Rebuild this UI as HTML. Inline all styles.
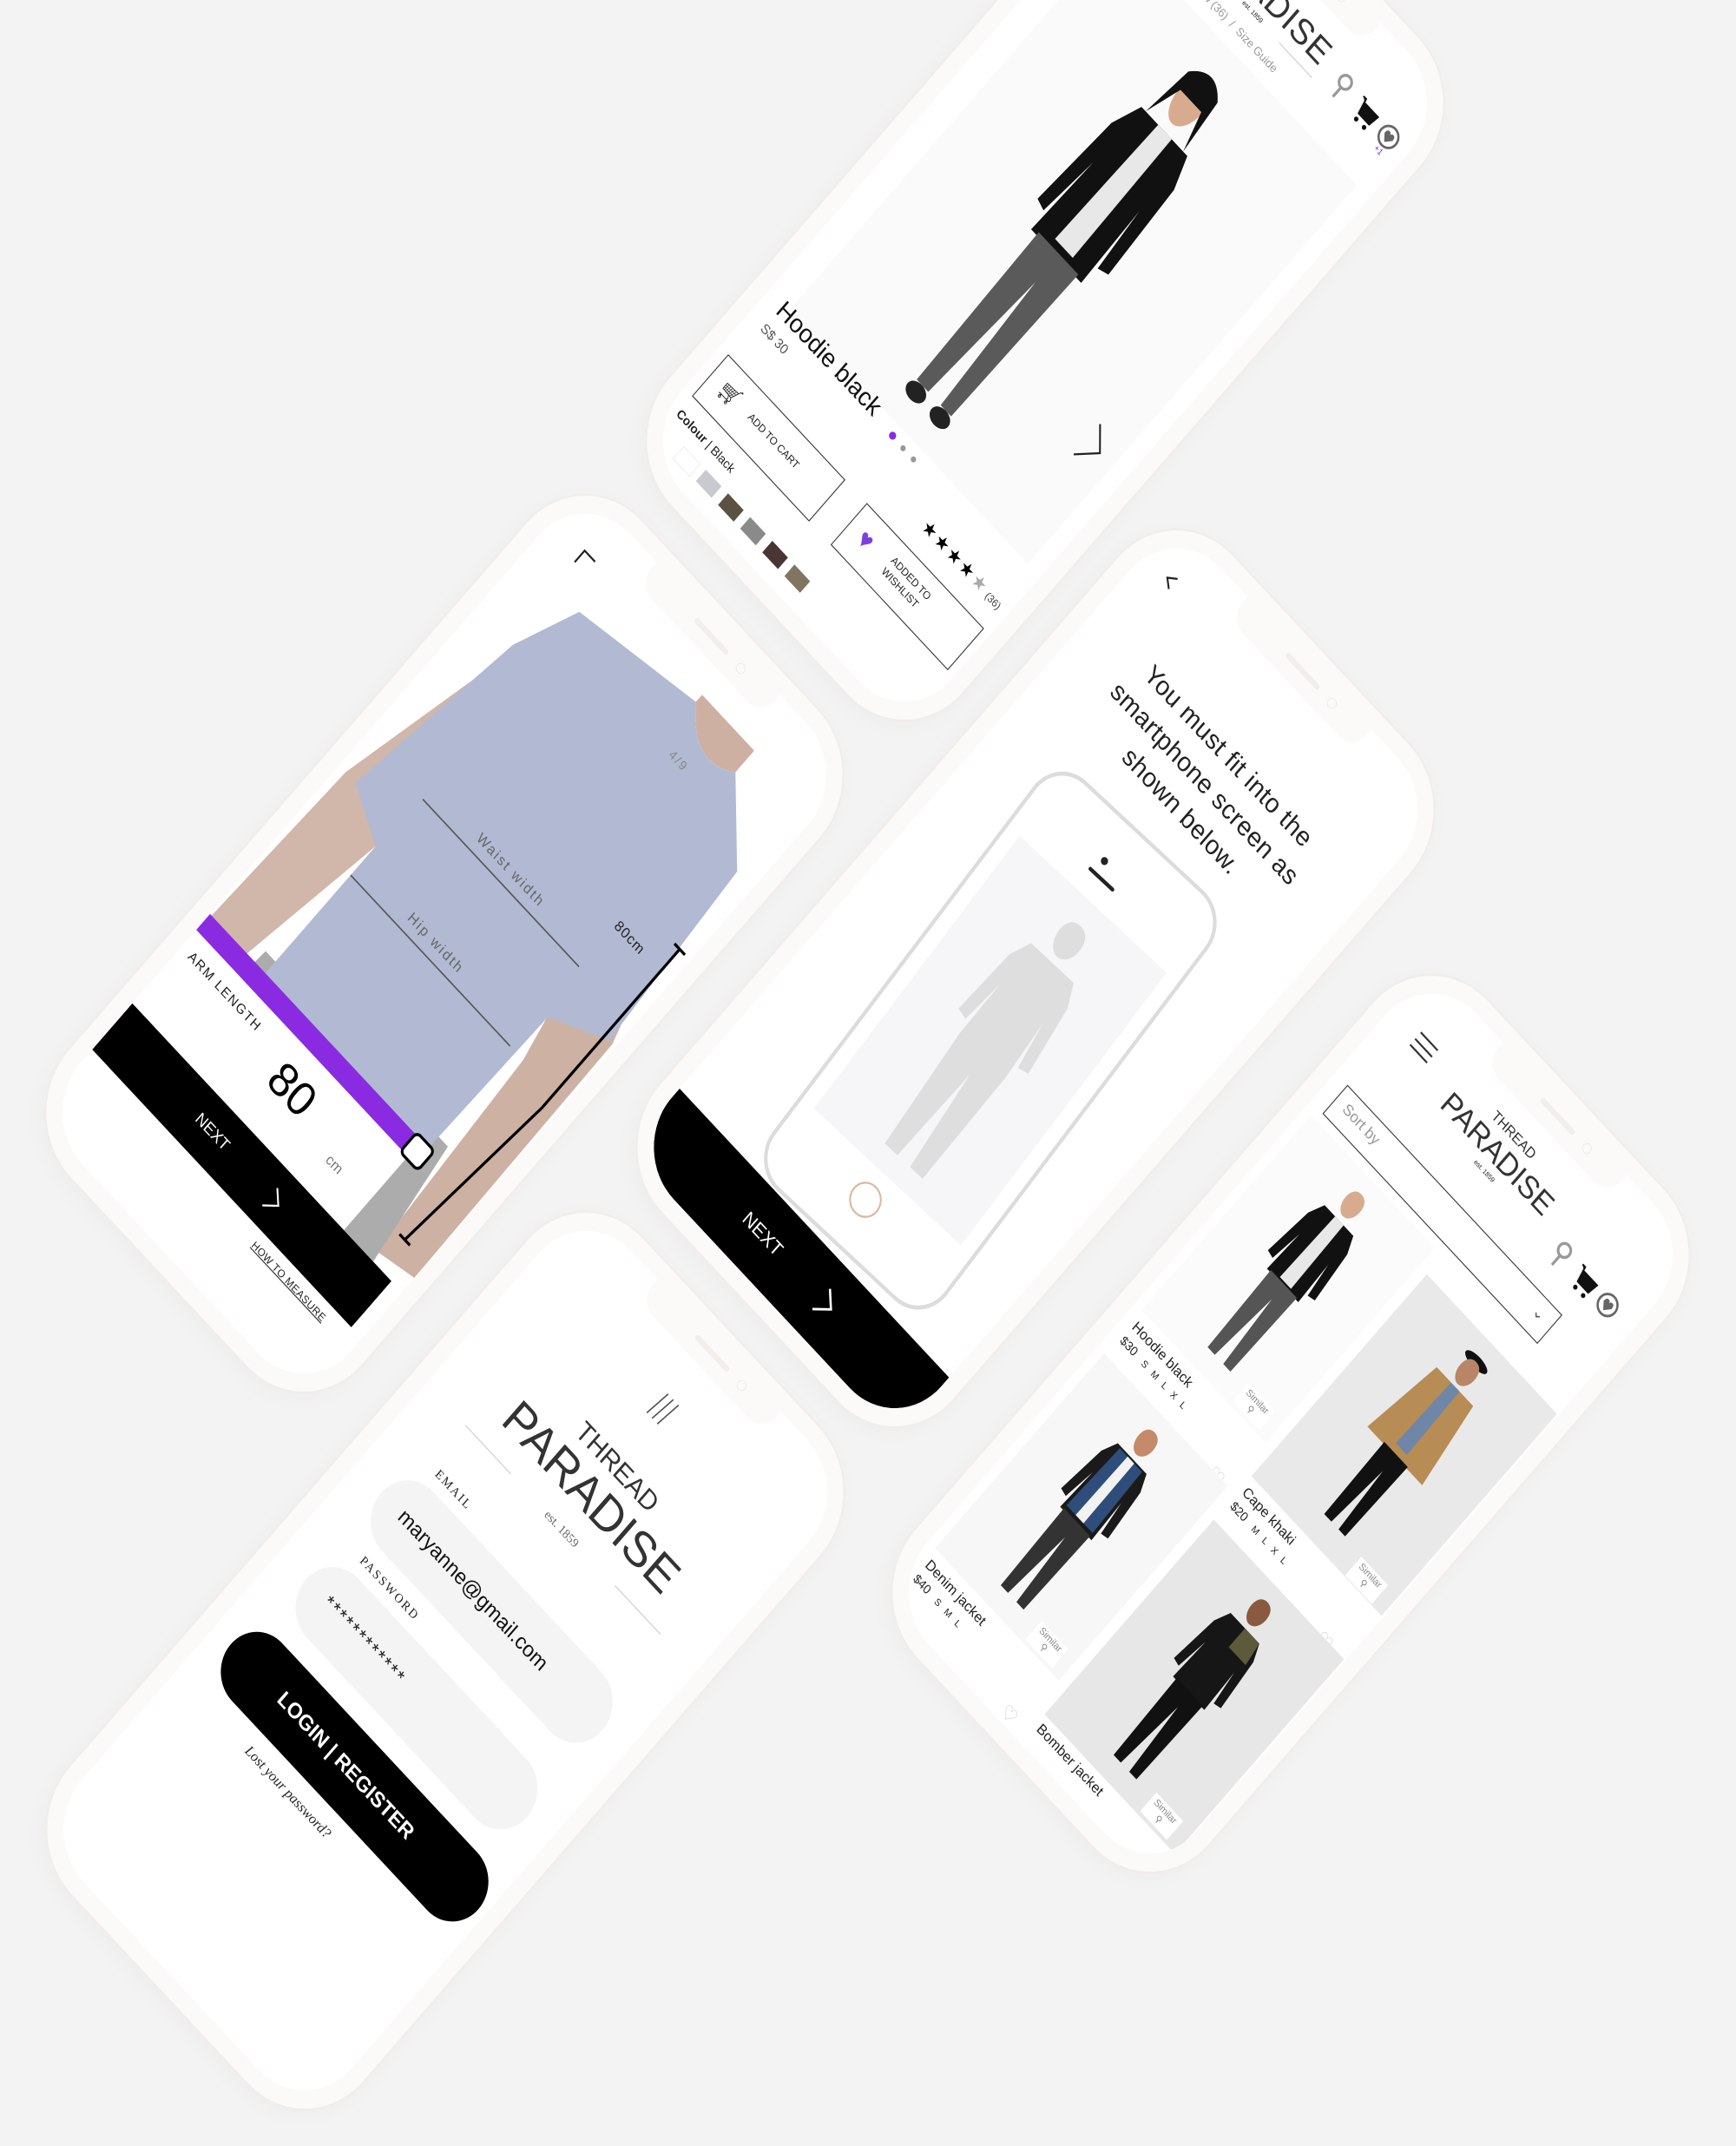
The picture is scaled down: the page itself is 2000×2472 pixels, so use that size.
<!DOCTYPE html>
<html><head><meta charset="utf-8">
<style>
html,body{margin:0;padding:0}
body{width:2000px;height:2091px;background:#f3f3f3;position:relative;overflow:hidden;font-family:"Liberation Sans",sans-serif;color:#222}
.ph{position:absolute;width:450px;height:910px;box-sizing:border-box;border:18px solid #fcfaf9;border-radius:90px;background:#fff;box-shadow:0 0 0 2px #f1edeb,0 6px 24px rgba(0,0,0,.03);transform:matrix(0.750,0.804,-0.722,0.831,0,0);overflow:hidden}
.ph .in{position:absolute;left:0;top:0;width:414px;height:874px;overflow:hidden;border-radius:72px}
.notch{position:absolute;left:112px;top:-4px;width:190px;height:34px;background:#fcfaf9;border-radius:0 0 22px 22px;z-index:20}
.notch:before{content:"";position:absolute;left:70px;top:12px;width:50px;height:6px;border-radius:3px;background:#f2eeec}
.notch:after{content:"";position:absolute;left:135px;top:10px;width:9px;height:9px;border-radius:50%;border:1px solid #f0ebe8}
.a{position:absolute;white-space:nowrap}
.logo{text-align:center;color:#333}
.sw{position:absolute;width:24px;height:16px}
.btn{position:absolute;border:1px solid #333;box-sizing:border-box;font-size:11px;background:#fff}
.sim{position:absolute;background:#fff;font-size:10px;color:#888;padding:2px 5px;text-align:center}
</style></head><body>

<!-- Phone A : product detail -->
<div class="ph" style="left:979px;top:-142px">
<div class="in">
<div class="notch"></div>
<div class="a logo" style="left:95px;top:30px;width:190px;font-size:16px;letter-spacing:1px">THREAD</div>
<div class="a logo" style="left:80px;top:46px;width:220px;font-size:36px;letter-spacing:1px">PARADISE</div>
<div class="a" style="left:178px;top:88px;font-size:7px">est. 1859</div>
<div class="a" style="left:95px;top:92px;width:50px;border-top:1px solid #ccc"></div>
<div class="a" style="left:235px;top:92px;width:50px;border-top:1px solid #ccc"></div>
<svg class="a" style="left:305px;top:58px" width="100" height="40" viewBox="0 0 100 40">
<circle cx="10" cy="12" r="7" fill="none" stroke="#999" stroke-width="3"/><line x1="10" y1="19" x2="10" y2="32" stroke="#999" stroke-width="3"/>
<path d="M34 8 L38 8 L42 24 L58 24 L60 12 L40 12" fill="#111" stroke="#111" stroke-width="2"/><circle cx="44" cy="30" r="2.5" fill="#111"/><circle cx="56" cy="30" r="2.5" fill="#111"/>
<circle cx="82" cy="18" r="11" fill="none" stroke="#666" stroke-width="2.5"/><path d="M82 25 L76 18 Q76 13 79 13 Q82 13 82 16 Q82 13 85 13 Q88 13 88 18Z" fill="#666"/>
<text x="78" y="38" font-size="9" fill="#8a2be2" font-family="Liberation Sans">+1</text></svg>
<div class="a" style="left:20px;top:108px;font-size:12px;color:#444">Product Detail <span style="color:#999">&nbsp;/&nbsp; Review (36) &nbsp;/&nbsp; Size Guide</span></div>
<div class="a" style="left:30px;top:135px;width:365px;height:525px;background:#fafafa"></div>
<svg class="a" style="left:125px;top:160px" width="160" height="480" viewBox="0 0 100 250" preserveAspectRatio="none">
<path d="M50 8 c-8 0-11 7-11 14 c0 9 5 16 11 16 c6 0 11-7 11-16 c0-7-3-14-11-14z" fill="#d9ab8e"/>
<path d="M36 12 Q50 -2 64 12 L68 44 L60 22 L40 22 L32 44Z" fill="#111"/>
<path d="M28 44 L72 44 L80 62 L84 120 L76 122 L72 84 L74 134 L26 134 L28 84 L24 122 L16 120 L20 62 Z" fill="#111"/>
<path d="M44 44 L57 44 L59 128 L42 128 Z" fill="#e8e8e8"/>
<path d="M31 132 L69 132 L67 236 L57 236 L51 152 L45 236 L34 236 Z" fill="#5a5a5a"/>
<ellipse cx="39" cy="241" rx="8" ry="5" fill="#222"/><ellipse cx="62" cy="241" rx="8" ry="5" fill="#222"/></svg>
<svg class="a" style="left:352px;top:500px" width="30" height="50"><path d="M4 4 L24 25 L4 46" fill="none" stroke="#222" stroke-width="2"/></svg>
<div class="a" style="left:20px;top:650px;font-size:26px;color:#111">Hoodie black</div>
<div class="a" style="left:20px;top:685px;font-size:14px;color:#555">S$ 30</div>
<div class="a" style="left:195px;top:668px;width:8px;height:8px;border-radius:50%;background:#8a2be2"></div>
<div class="a" style="left:213px;top:670px;width:6px;height:6px;border-radius:50%;background:#999"></div>
<div class="a" style="left:229px;top:670px;width:6px;height:6px;border-radius:50%;background:#999"></div>
<div class="a" style="left:285px;top:700px;font-size:19px;color:#000;letter-spacing:2px">★★★★<span style="color:#aaa">★</span><span style="font-size:11px;color:#444;letter-spacing:0"> (36)</span></div>
<div class="btn" style="left:12px;top:740px;width:180px;height:58px"><span style="position:absolute;left:14px;top:14px;font-size:22px">🛒︎</span><span style="position:absolute;left:58px;top:21px">ADD TO CART</span></div>
<div class="btn" style="left:225px;top:740px;width:180px;height:58px"><span style="position:absolute;left:16px;top:11px;font-size:26px;color:#7b3fe4">♥</span><span style="position:absolute;left:58px;top:13px;line-height:15px">ADDED TO<br>WISHLIST</span></div>
<div class="a" style="left:12px;top:812px;font-size:13px"><b>Colour</b> | Black</div>
<div class="sw" style="left:40px;top:840px;background:#fff;border:1px solid #eee"></div>
<div class="sw" style="left:74px;top:840px;background:#c9cacf"></div>
<div class="sw" style="left:108px;top:840px;background:#5b5244"></div>
<div class="sw" style="left:142px;top:840px;background:#8a8a8a"></div>
<div class="sw" style="left:176px;top:840px;background:#4a3535"></div>
<div class="sw" style="left:210px;top:840px;background:#7f7560"></div>
</div></div>

<!-- Phone B : measure -->
<div class="ph" style="left:287px;top:632px">
<div class="in">
<div class="notch"></div>
<svg class="a" style="left:45px;top:45px" width="20" height="20"><path d="M2 18 L2 2 L18 2" fill="none" stroke="#222" stroke-width="2"/></svg>
<svg class="a" style="left:0;top:60px" width="414" height="660" viewBox="0 0 414 660">
<g opacity="0.9">
<path d="M60 110 L10 330 L0 600 L45 610 L85 360 L120 200 Z" fill="#ccafa1"/>
<path d="M355 140 L410 320 L414 640 L365 650 L350 400 L320 260 Z" fill="#c8aa9b"/>
<path d="M70 520 L350 520 L370 660 L60 660 Z" fill="#a4a4a4"/>
<path d="M240 10 Q280 60 320 30 L320 0 L240 0Z" fill="#c8a898"/>
<path d="M85 35 L240 10 Q280 60 320 30 L390 100 L405 320 L340 350 L335 560 L85 565 L85 360 L25 330 L55 110 Z" fill="#a9b3ce"/>
</g>
<line x1="90" y1="290" x2="330" y2="290" stroke="#555" stroke-width="1.5"/>
<line x1="85" y1="400" x2="330" y2="400" stroke="#555" stroke-width="1.5"/>
<text x="160" y="278" font-size="15" fill="#666" letter-spacing="2" font-family="Liberation Sans">Waist width</text>
<text x="160" y="388" font-size="15" fill="#666" letter-spacing="2" font-family="Liberation Sans">Hip width</text>
<text x="255" y="70" font-size="13" fill="#888" letter-spacing="2" font-family="Liberation Sans">4/9</text>
<path d="M398 200 L398 420 L380 620" fill="none" stroke="#000" stroke-width="3"/>
<line x1="390" y1="200" x2="406" y2="200" stroke="#000" stroke-width="3"/><line x1="372" y1="620" x2="388" y2="620" stroke="#000" stroke-width="3"/>
<text x="330" y="235" font-size="15" fill="#222" letter-spacing="1" font-family="Liberation Sans">80cm</text>
</svg>
<div class="a" style="left:0;top:618px;width:325px;height:102px;background:#fff"></div>
<div class="a" style="left:0;top:596px;width:322px;height:22px;background:#8a2be2"></div>
<div class="a" style="left:314px;top:592px;width:24px;height:24px;border:3px solid #000;border-radius:7px;background:#fff"></div>
<div class="a" style="left:12px;top:632px;font-size:14px;letter-spacing:1.5px">ARM LENGTH</div>
<div class="a" style="left:160px;top:632px;font-size:48px;color:#000">80</div>
<div class="a" style="left:262px;top:672px;font-size:15px;color:#777">cm</div>
<div class="a" style="left:0;top:720px;width:398px;height:64px;background:#000"></div>
<div class="a" style="left:130px;top:741px;font-size:17px;color:#fff">NEXT</div>
<svg class="a" style="left:240px;top:738px" width="20" height="30"><path d="M3 3 L16 15 L3 27" fill="none" stroke="#fff" stroke-width="2"/></svg>
<div class="a" style="left:262px;top:794px;font-size:11px;text-decoration:underline;letter-spacing:.5px">HOW TO MEASURE</div>
</div></div>

<!-- Phone C : fit -->
<div class="ph" style="left:968px;top:672px">
<div class="in">
<div class="notch"></div>
<svg class="a" style="left:30px;top:38px" width="20" height="20"><path d="M14 3 L5 10 L14 17" fill="none" stroke="#222" stroke-width="2"/></svg>
<div class="a" style="left:0;top:110px;width:414px;text-align:center;font-size:27px;line-height:38px;color:#222;letter-spacing:.5px">You must fit into the<br>smartphone screen as<br>shown below.</div>
<div class="a" style="left:0;top:790px;width:414px;height:90px;background:#000"></div>
<div class="a" style="left:140px;top:820px;font-size:20px;color:#fff">NEXT</div>
<svg class="a" style="left:255px;top:815px" width="22" height="34"><path d="M3 3 L18 17 L3 31" fill="none" stroke="#fff" stroke-width="2.5"/></svg>
<div class="a" style="left:88px;top:250px;width:244px;height:525px;border:4px solid #dcdcdc;border-radius:42px;background:#fff;transform:rotate(-4deg);z-index:3">
<div class="a" style="left:100px;top:40px;width:8px;height:8px;border-radius:50%;background:#222"></div>
<div class="a" style="left:95px;top:58px;width:36px;height:4px;border-radius:2px;background:#222"></div>
<div class="a" style="left:16px;top:85px;width:212px;height:355px;background:#f6f6f8"></div>
<svg class="a" style="left:55px;top:100px" width="140" height="335" viewBox="0 0 100 250" preserveAspectRatio="none">
<path d="M50 8 c-8 0-11 7-11 14 c0 9 5 16 11 16 c6 0 11-7 11-16 c0-7-3-14-11-14z M28 44 L72 44 L80 62 L86 120 L77 122 L72 84 L74 134 L70 236 L57 236 L51 152 L44 236 L31 236 L26 134 L28 84 L23 122 L14 120 L20 62 Z" fill="#dedede"/></svg>
<div class="a" style="left:100px;top:455px;width:32px;height:32px;border-radius:50%;border:2px solid #d9b9a0"></div>
</div>
</div></div>

<!-- Phone D : grid -->
<div class="ph" style="left:1262px;top:1185px">
<div class="in">
<div class="notch"></div>
<div class="a" style="left:40px;top:55px;width:26px;border-top:2px solid #333;height:7px;border-bottom:2px solid #333"></div>
<div class="a" style="left:40px;top:72px;width:26px;border-top:2px solid #333"></div>
<div class="a logo" style="left:100px;top:50px;width:170px;font-size:15px">THREAD</div>
<div class="a logo" style="left:90px;top:66px;width:190px;font-size:32px">PARADISE</div>
<div class="a" style="left:172px;top:104px;font-size:7px">est. 1859</div>
<svg class="a" style="left:295px;top:90px" width="100" height="40" viewBox="0 0 100 40">
<circle cx="10" cy="12" r="7" fill="none" stroke="#999" stroke-width="3"/><line x1="10" y1="19" x2="10" y2="32" stroke="#999" stroke-width="3"/>
<path d="M34 8 L38 8 L42 24 L58 24 L60 12 L40 12" fill="#111" stroke="#111" stroke-width="2"/><circle cx="44" cy="30" r="2.5" fill="#111"/><circle cx="56" cy="30" r="2.5" fill="#111"/>
<circle cx="82" cy="18" r="11" fill="none" stroke="#666" stroke-width="2.5"/><path d="M82 25 L76 18 Q76 13 79 13 Q82 13 82 16 Q82 13 85 13 Q88 13 88 18Z" fill="#666"/></svg>
<div class="a" style="left:18px;top:150px;width:330px;height:40px;border:1.5px solid #333;box-sizing:border-box"><span style="position:absolute;left:12px;top:9px;font-size:16px;color:#999">Sort by</span><span style="position:absolute;right:12px;top:6px;font-size:16px;color:#555">⌄</span></div>
<div class="a" style="left:10px;top:200px;width:190px;height:270px;background:#fbfbfb"></div>
<svg class="a" style="left:55px;top:210px" width="100" height="250" viewBox="0 0 100 250" preserveAspectRatio="none">
<path d="M50 8 c-8 0-11 7-11 14 c0 9 5 16 11 16 c6 0 11-7 11-16 c0-7-3-14-11-14z" fill="#d9ab8e"/><path d="M28 44 L72 44 L80 62 L86 120 L77 122 L72 84 L74 134 L26 134 L28 84 L23 122 L14 120 L20 62 Z" fill="#111"/><path d="M44 44 L57 44 L59 130 L42 130 Z" fill="#e8e8e8"/><path d="M30 132 L70 132 L68 236 L57 236 L51 152 L44 236 L33 236 Z" fill="#555"/></svg>
<div class="sim" style="left:145px;top:440px">Similar<br>⚲</div>
<div class="a" style="left:14px;top:478px;font-size:15px">Hoodie black</div>
<div class="a" style="left:14px;top:498px;font-size:13px">$30 &nbsp; <span style="font-size:10px;letter-spacing:8px">SMLXL</span></div>
<div class="a" style="left:175px;top:520px;font-size:20px;color:#ccc">♡</div>
<div class="a" style="left:212px;top:225px;width:200px;height:280px;background:#e9e9e9"></div>
<svg class="a" style="left:262px;top:240px" width="100" height="250" viewBox="0 0 100 250" preserveAspectRatio="none">
<ellipse cx="50" cy="10" rx="16" ry="6" fill="#111"/><path d="M50 10 c-8 0-11 7-11 14 c0 9 5 16 11 16 c6 0 11-7 11-16 c0-7-3-14-11-14z" fill="#b88566"/><path d="M22 44 L78 44 L92 140 L8 140 Z" fill="#b88c55"/><path d="M44 44 L57 44 L59 130 L42 130 Z" fill="#6e86a8"/><path d="M32 138 L68 138 L66 236 L56 236 L51 160 L45 236 L34 236 Z" fill="#111"/></svg>
<div class="sim" style="left:355px;top:478px">Similar<br>⚲</div>
<div class="a" style="left:216px;top:512px;font-size:15px">Cape khaki</div>
<div class="a" style="left:216px;top:532px;font-size:13px">$20 &nbsp; <span style="font-size:10px;letter-spacing:8px">MLXL</span></div>
<div class="a" style="left:375px;top:555px;font-size:20px;color:#ccc">♡</div>
<div class="a" style="left:10px;top:530px;width:190px;height:270px;background:#f7f7f7"></div>
<svg class="a" style="left:55px;top:540px" width="100" height="250" viewBox="0 0 100 250" preserveAspectRatio="none">
<path d="M50 8 c-8 0-11 7-11 14 c0 9 5 16 11 16 c6 0 11-7 11-16 c0-7-3-14-11-14z" fill="#c48a6a"/><path d="M28 44 L72 44 L80 62 L86 120 L77 122 L72 84 L74 134 L26 134 L28 84 L23 122 L14 120 L20 62 Z" fill="#1a1a1a"/><path d="M33 46 L67 46 L70 128 L30 128Z" fill="#2f4d7a"/><path d="M45 46 L55 46 L56 128 L44 128 Z" fill="#f2f2f2"/><path d="M30 132 L70 132 L68 236 L57 236 L51 152 L44 236 L33 236 Z" fill="#333"/></svg>
<div class="sim" style="left:145px;top:770px">Similar<br>⚲</div>
<div class="a" style="left:14px;top:808px;font-size:15px">Denim jacket</div>
<div class="a" style="left:14px;top:828px;font-size:13px">$40 &nbsp; <span style="font-size:10px;letter-spacing:8px">SML</span></div>
<div class="a" style="left:175px;top:850px;font-size:20px;color:#ccc">♡</div>
<div class="a" style="left:212px;top:565px;width:200px;height:270px;background:#e7e7e7"></div>
<svg class="a" style="left:262px;top:575px" width="100" height="250" viewBox="0 0 100 250" preserveAspectRatio="none">
<path d="M50 8 c-8 0-11 7-11 14 c0 9 5 16 11 16 c6 0 11-7 11-16 c0-7-3-14-11-14z" fill="#8a5a40"/><path d="M28 44 L72 44 L80 62 L86 120 L77 122 L72 84 L74 134 L26 134 L28 84 L23 122 L14 120 L20 62 Z" fill="#161616"/><path d="M50 44 L72 44 L76 70 L50 70Z" fill="#5c5a3a"/><path d="M30 132 L70 132 L68 236 L57 236 L51 152 L44 236 L33 236 Z" fill="#111"/></svg>
<div class="sim" style="left:355px;top:805px">Similar<br>⚲</div>
<div class="a" style="left:216px;top:840px;font-size:15px">Bomber jacket</div>
</div></div>

<!-- Phone E : login -->
<div class="ph" style="left:288px;top:1458px">
<div class="in">
<div class="notch"></div>
<svg class="a" style="left:192px;top:70px" width="30" height="40"><path d="M8 4 L4 34 M16 4 L12 34 M24 4 L20 34" stroke="#555" stroke-width="1.5"/></svg>
<div class="a logo" style="left:60px;top:150px;width:300px;font-size:28px;color:#333">THREAD</div>
<div class="a logo" style="left:40px;top:178px;width:340px;font-size:50px;color:#333">PARADISE</div>
<div class="a" style="left:185px;top:245px;font-size:13px;color:#666;font-family:'Liberation Serif',serif">est. 1859</div>
<div class="a" style="left:60px;top:252px;width:70px;border-top:1px solid #ccc"></div>
<div class="a" style="left:290px;top:252px;width:70px;border-top:1px solid #ccc"></div>
<div class="a" style="left:70px;top:300px;font-size:13px;letter-spacing:2px;font-family:'Liberation Serif',serif">EMAIL</div>
<div class="a" style="left:40px;top:325px;width:340px;height:82px;border-radius:41px;background:#f4f4f4"></div>
<div class="a" style="left:70px;top:352px;font-size:22px;color:#111">maryanne@gmail.com</div>
<div class="a" style="left:70px;top:420px;font-size:13px;letter-spacing:2px;font-family:'Liberation Serif',serif">PASSWORD</div>
<div class="a" style="left:40px;top:445px;width:340px;height:82px;border-radius:41px;background:#f4f4f4"></div>
<div class="a" style="left:70px;top:474px;font-size:20px;letter-spacing:2px">************</div>
<div class="a" style="left:25px;top:550px;width:380px;height:80px;border-radius:40px;background:#000"></div>
<div class="a" style="left:100px;top:576px;font-size:22px;color:#fff;font-weight:bold">LOGIN | REGISTER</div>
<div class="a" style="left:110px;top:645px;font-size:15px;font-style:italic;font-family:'Liberation Serif',serif">Lost your password?</div>
</div></div>

</body></html>
